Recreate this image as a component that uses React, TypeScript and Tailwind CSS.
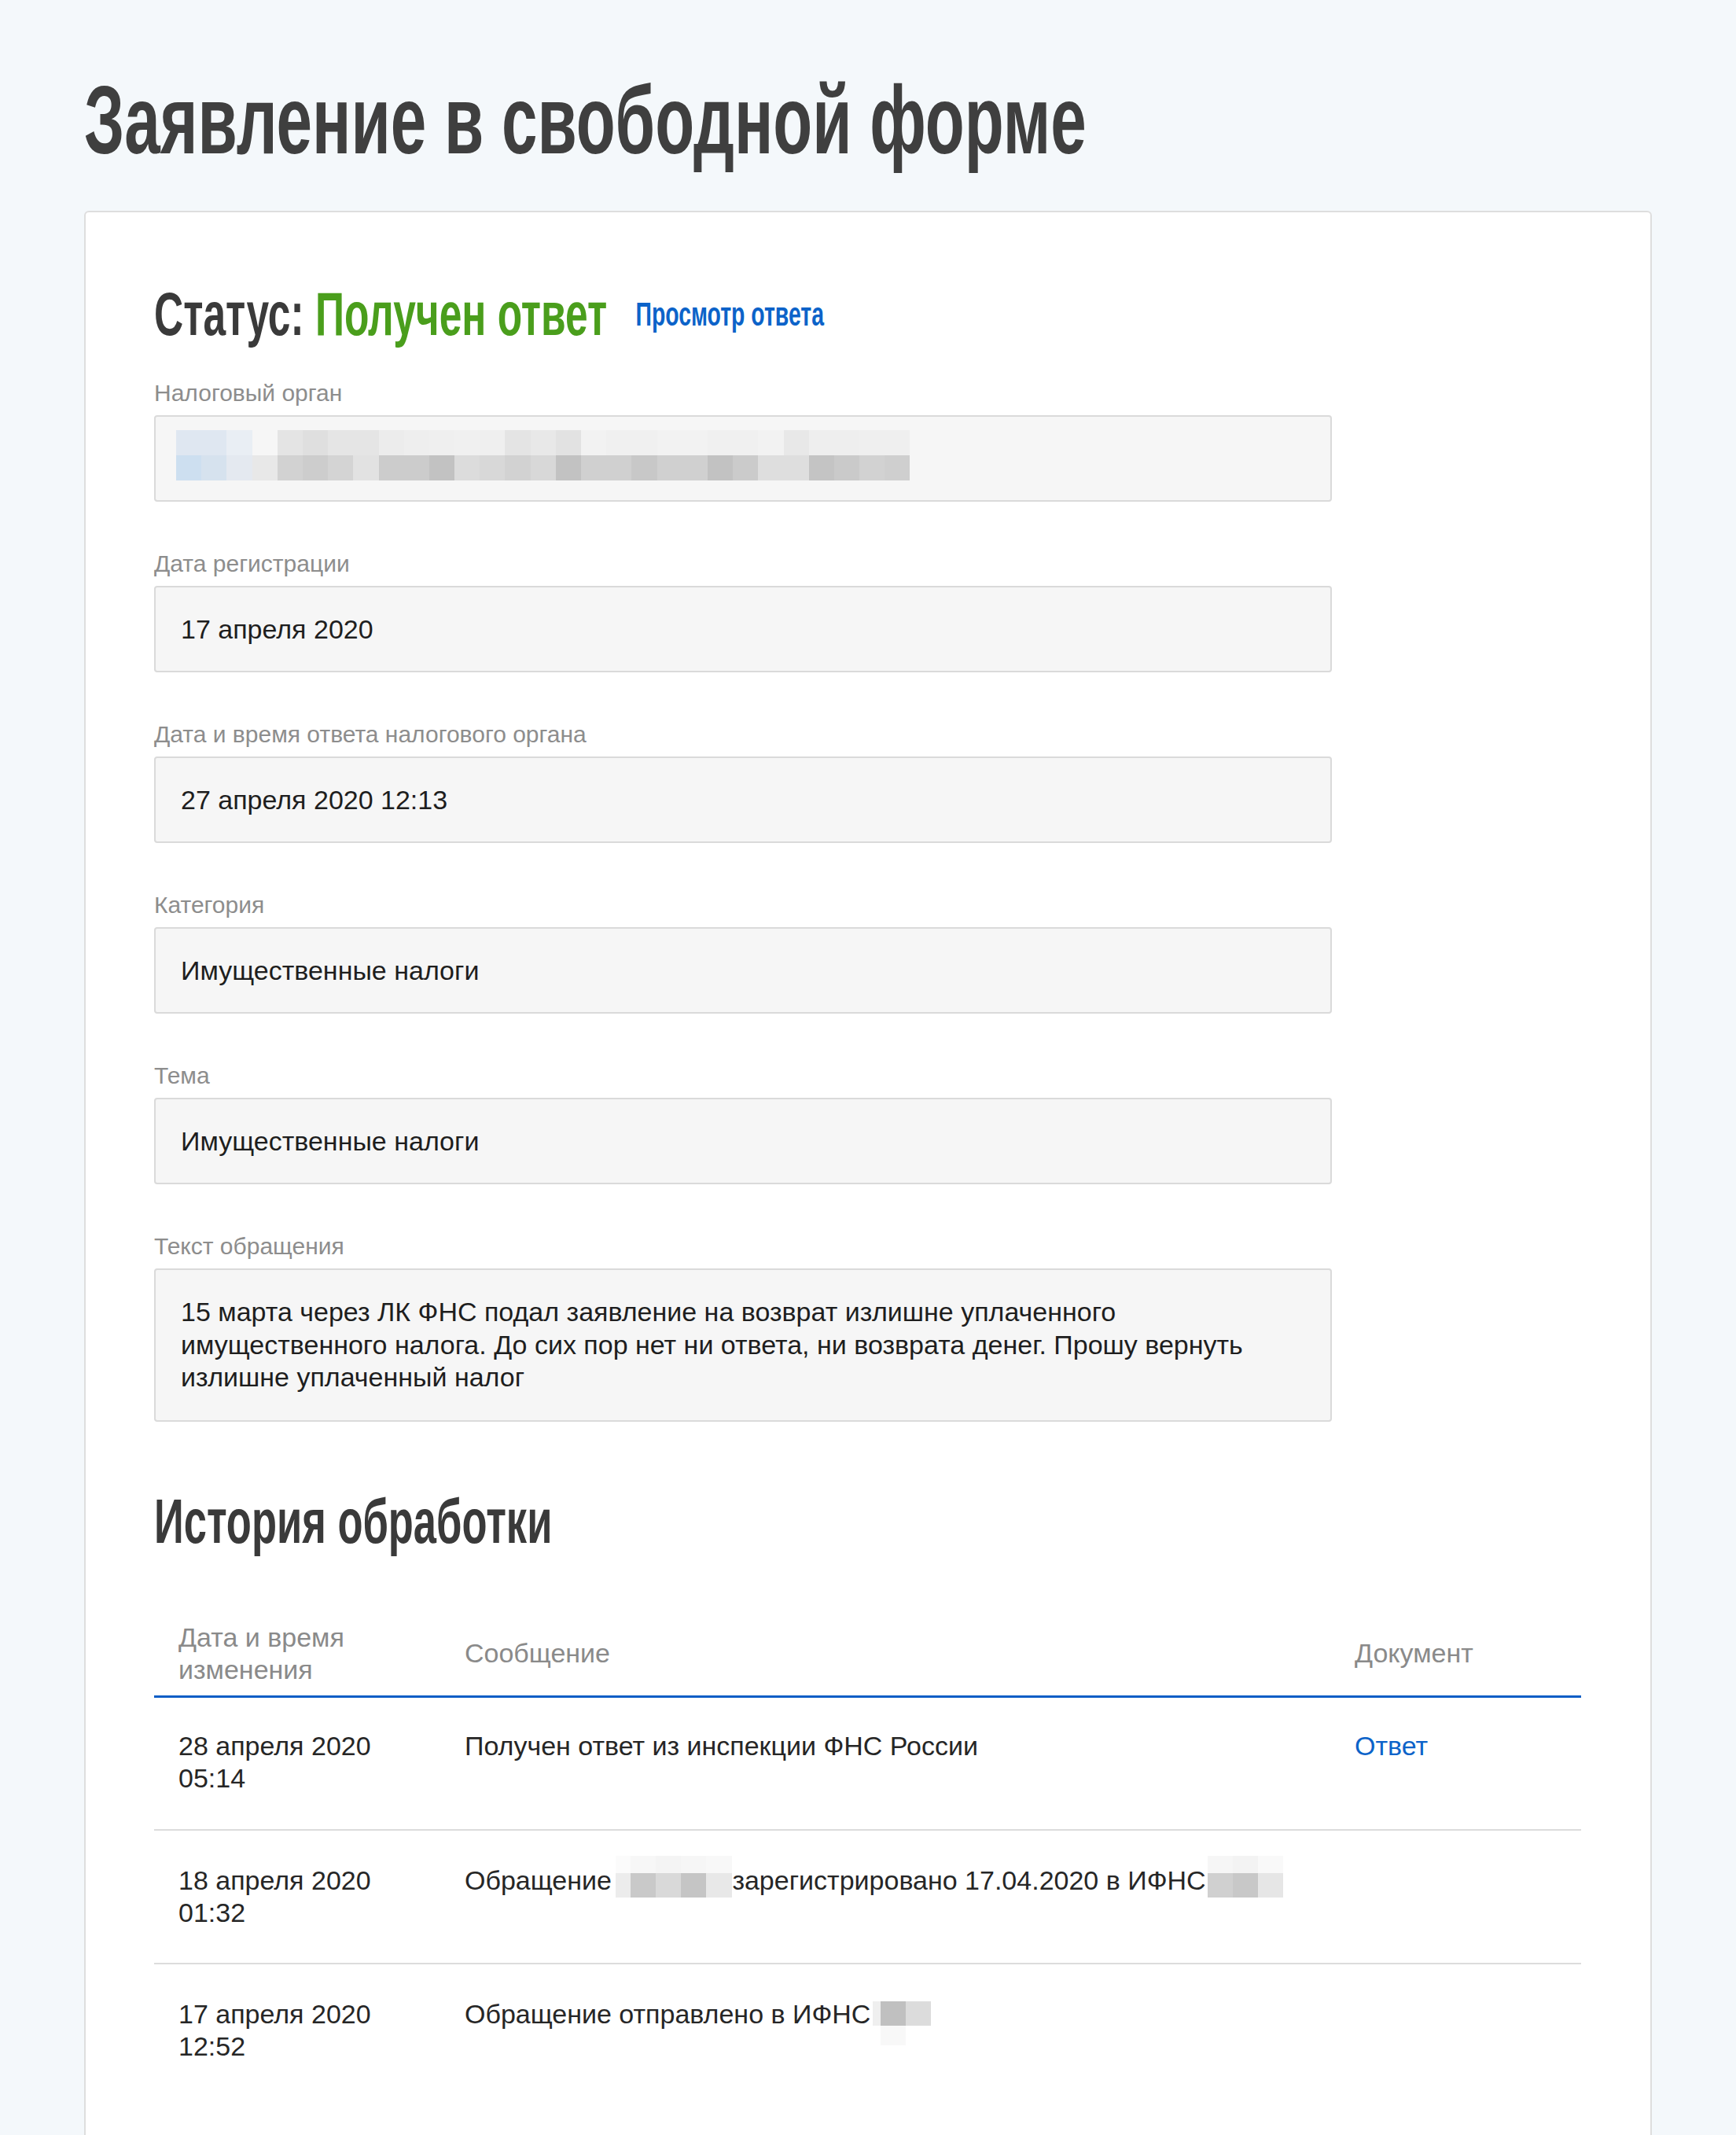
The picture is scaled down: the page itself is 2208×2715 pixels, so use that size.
import React from "react";

const row1 = [
  "#dfe7f1", "#dfe7f1", "#e9eef4", "#f6f6f6", "#e4e4e4", "#dfdfdf", "#e5e5e5", "#e5e5e5", "#ececec", "#eeeeee",
  "#efefef", "#f0f0f0", "#efefef", "#e4e4e4", "#e8e8e8", "#e2e2e2", "#f2f2f2", "#f0f0f0", "#f0f0f0", "#f2f2f2",
  "#f2f2f2", "#f0f0f0", "#f0f0f0", "#f2f2f2", "#e8e8e8", "#eeeeee", "#eeeeee", "#efefef", "#efefef",
];
const row2 = [
  "#cddff0", "#d6e2ee", "#e4e9f0", "#e8e8e8", "#d2d2d2", "#cdcdcd", "#d4d4d4", "#e2e2e2", "#cccccc", "#cccccc",
  "#c2c2c2", "#dcdcdc", "#d8d8d8", "#d2d2d2", "#d8d8d8", "#c2c2c2", "#d0d0d0", "#d0d0d0", "#c8c8c8", "#d0d0d0",
  "#d0d0d0", "#c2c2c2", "#cbcbcb", "#dedede", "#dedede", "#c4c4c4", "#cacaca", "#d2d2d2", "#cfcfcf",
];

type Cell = { w: number; c: string };

function Redact({
  main,
  faint,
  faintTop,
  align,
}: {
  main: Cell[];
  faint: Cell[];
  faintTop: boolean;
  align: string;
}) {
  return (
    <span className={`relative inline-flex h-[31px] ${align}`}>
      {main.map((b, i) => (
        <span key={i} className="block h-[31px]" style={{ width: b.w, backgroundColor: b.c }} />
      ))}
      <span className={`absolute left-0 flex ${faintTop ? "top-[-22px] h-[22px]" : "top-[31px] h-[25px]"}`}>
        {faint.map((b, i) => (
          <span key={i} className="block h-full" style={{ width: b.w, backgroundColor: b.c }} />
        ))}
      </span>
    </span>
  );
}

function Field({ label, children, first }: { label: string; children: React.ReactNode; first?: boolean }) {
  return (
    <div className={first ? "mt-[44px]" : "mt-[61px]"}>
      <div className="text-[30px] leading-[36px] text-[#8d8d8d] mb-[10px]">{label}</div>
      {children}
    </div>
  );
}

function Box({ children }: { children: React.ReactNode }) {
  return (
    <div className="w-[1498px] border-2 border-[#dadada] rounded-[4px] bg-[#f6f6f6] px-[32px] py-[32px] text-[34px] leading-[42px] text-[#1e1e1e]">
      {children}
    </div>
  );
}

export default function App() {
  return (
    <div className="h-[2715px] overflow-hidden bg-[#f4f8fb] pl-[107px] pt-[91px] font-['Liberation_Sans',Arial,sans-serif]">
      <h1 className="origin-left scale-x-[0.665] whitespace-nowrap text-[123px] font-bold leading-none text-[#3f3f3f]">
        Заявление в свободной форме
      </h1>

      <div className="mt-[54px] w-[1994px] rounded-[6px] border-2 border-[#dedede] bg-white pl-[87px] pt-[90px] pb-[200px]">
        <div className="flex origin-left scale-x-[0.66] items-center whitespace-nowrap font-bold leading-none">
          <span className="text-[78px] text-[#3a3a3a]">
            Статус: <span className="text-[#4a9e1c]">Получен ответ</span>
          </span>
          <span className="ml-[55px] text-[43px] text-[#0c63c9]">Просмотр ответа</span>
        </div>

        <Field label="Налоговый орган" first>
          <div className="h-[110px] w-[1498px] rounded-[4px] border-2 border-[#dadada] bg-[#f6f6f6] pl-[26px] pt-[17px]">
            <div className="flex">
              {row1.map((c, i) => (
                <span key={i} className="block h-[32px] w-[32.2px]" style={{ backgroundColor: c }} />
              ))}
            </div>
            <div className="flex">
              {row2.map((c, i) => (
                <span key={i} className="block h-[32px] w-[32.2px]" style={{ backgroundColor: c }} />
              ))}
            </div>
          </div>
        </Field>

        <Field label="Дата регистрации">
          <Box>17 апреля 2020</Box>
        </Field>

        <Field label="Дата и время ответа налогового органа">
          <Box>27 апреля 2020 12:13</Box>
        </Field>

        <Field label="Категория">
          <Box>Имущественные налоги</Box>
        </Field>

        <Field label="Тема">
          <Box>Имущественные налоги</Box>
        </Field>

        <Field label="Текст обращения">
          <div className="w-[1498px] rounded-[4px] border-2 border-[#dadada] bg-[#f6f6f6] px-[32px] py-[33px] text-[34px] leading-[41.5px] text-[#1e1e1e]">
            15 марта через ЛК ФНС подал заявление на возврат излишне уплаченного
            <br />
            имущественного налога. До сих пор нет ни ответа, ни возврата денег. Прошу вернуть
            <br />
            излишне уплаченный налог
          </div>
        </Field>

        <h2 className="mt-[87px] origin-left scale-x-[0.664] whitespace-nowrap text-[79px] font-bold leading-none text-[#3a3a3a]">
          История обработки
        </h2>

        <table className="mt-[77px] w-[1815px] table-fixed border-collapse text-[34px] leading-[41.5px]">
          <colgroup>
            <col className="w-[364px]" />
            <col className="w-[1132px]" />
            <col className="w-[319px]" />
          </colgroup>
          <thead>
            <tr className="text-left text-[#8a8a8a]">
              <th className="border-b-[3px] border-[#0b5ec6] py-[11px] pl-[31px] align-middle font-normal">
                Дата и время
                <br />
                изменения
              </th>
              <th className="border-b-[3px] border-[#0b5ec6] py-[11px] pl-[31px] align-middle font-normal">Сообщение</th>
              <th className="border-b-[3px] border-[#0b5ec6] py-[11px] pl-[31px] align-middle font-normal">Документ</th>
            </tr>
          </thead>
          <tbody className="text-[#262626]">
            <tr>
              <td className="border-b-2 border-[#dcdcdc] pt-[41px] pb-[43px] pl-[31px] align-top">
                28 апреля 2020
                <br />
                05:14
              </td>
              <td className="border-b-2 border-[#dcdcdc] pt-[41px] pb-[43px] pl-[31px] align-top whitespace-nowrap">
                Получен ответ из инспекции ФНС России
              </td>
              <td className="border-b-2 border-[#dcdcdc] pt-[41px] pb-[43px] pl-[31px] align-top text-[#0c63c9]">Ответ</td>
            </tr>
            <tr>
              <td className="border-b-2 border-[#dcdcdc] pt-[43px] pb-[42px] pl-[31px] align-top">
                18 апреля 2020
                <br />
                01:32
              </td>
              <td className="border-b-2 border-[#dcdcdc] pt-[43px] pb-[42px] pl-[31px] align-top whitespace-nowrap">
                Обращение{" "}
                <Redact
                  align="align-[-10px] -ml-[4px]"
                  faintTop
                  main={[
                    { w: 19, c: "#ececec" },
                    { w: 32, c: "#c9c9c9" },
                    { w: 32, c: "#d9d9d9" },
                    { w: 32, c: "#c5c5c5" },
                    { w: 33, c: "#e8e8e8" },
                  ]}
                  faint={[
                    { w: 19, c: "#fbfbfb" },
                    { w: 32, c: "#f7f7f7" },
                    { w: 32, c: "#f4f4f4" },
                    { w: 32, c: "#f6f6f6" },
                    { w: 33, c: "#f8f8f8" },
                  ]}
                />
                зарегистрировано 17.04.2020 в ИФНС
                <Redact
                  align="align-[-10px] ml-[2px]"
                  faintTop
                  main={[
                    { w: 32, c: "#d0d0d0" },
                    { w: 32, c: "#c8c8c8" },
                    { w: 32, c: "#e6e6e6" },
                  ]}
                  faint={[
                    { w: 32, c: "#f6f6f6" },
                    { w: 32, c: "#f3f3f3" },
                    { w: 32, c: "#f9f9f9" },
                  ]}
                />
              </td>
              <td className="border-b-2 border-[#dcdcdc] pt-[43px] pb-[42px] pl-[31px] align-top"></td>
            </tr>
            <tr>
              <td className="pt-[43px] pb-[43px] pl-[31px] align-top">
                17 апреля 2020
                <br />
                12:52
              </td>
              <td className="pt-[43px] pb-[43px] pl-[31px] align-top whitespace-nowrap">
                Обращение отправлено в ИФНС
                <Redact
                  align="align-[-3px] ml-[3px]"
                  faintTop={false}
                  main={[
                    { w: 10, c: "#efefef" },
                    { w: 32, c: "#c0c0c0" },
                    { w: 32, c: "#dcdcdc" },
                  ]}
                  faint={[
                    { w: 10, c: "#ffffff" },
                    { w: 32, c: "#f8f8f8" },
                    { w: 32, c: "#ffffff" },
                  ]}
                />
              </td>
              <td className="pt-[43px] pb-[43px] pl-[31px] align-top"></td>
            </tr>
          </tbody>
        </table>
      </div>
    </div>
  );
}
